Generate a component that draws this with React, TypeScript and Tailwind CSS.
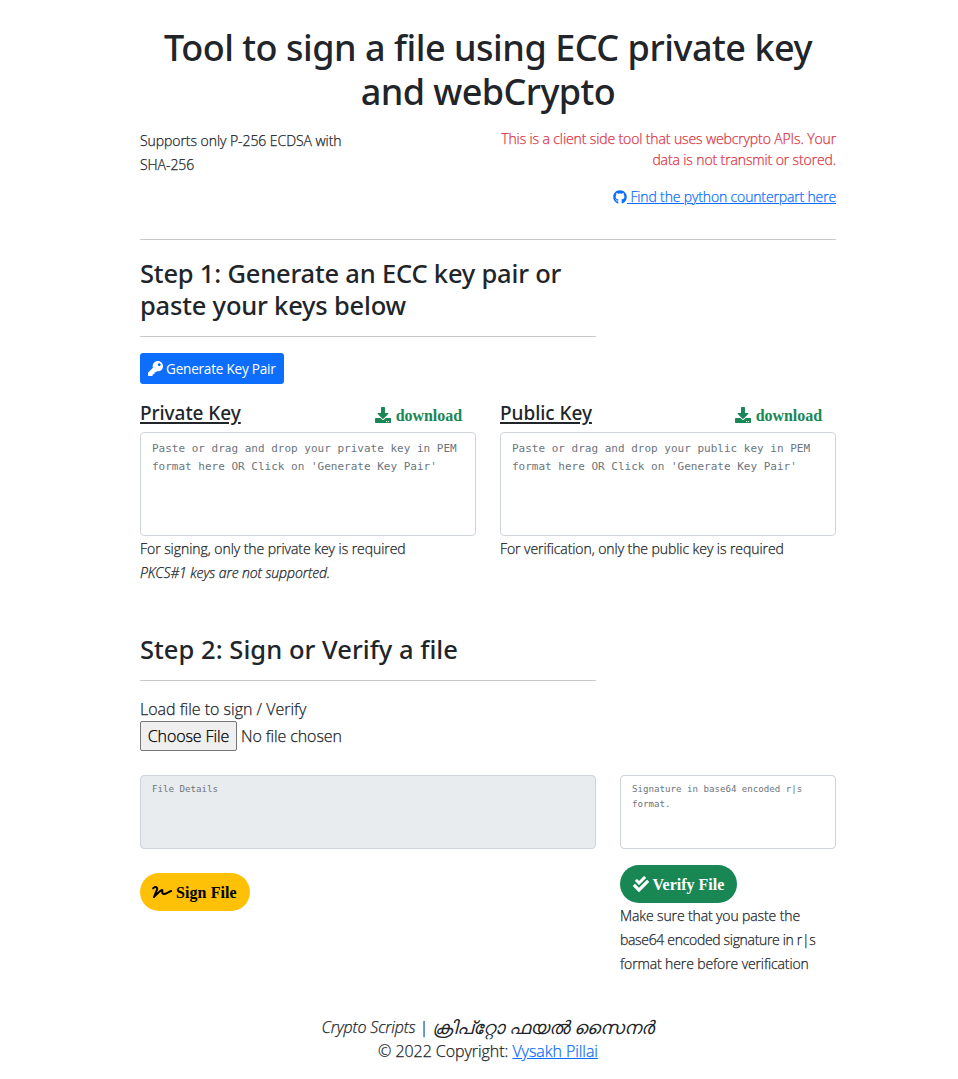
import { FaGithub, FaKey, FaDownload, FaSignature } from 'react-icons/fa';

const heading = "font-['Noto_Sans',sans-serif] font-medium [-webkit-text-stroke:0]";
const pill =
  "flex h-[38px] items-center gap-1 rounded-full pt-[2px] font-['Liberation_Serif',serif] text-[16px] font-bold [-webkit-text-stroke:0]";
const area =
  "block w-full resize-none rounded border border-[#ced4da] px-[11px] font-['DejaVu_Sans_Mono',monospace] font-normal placeholder:text-[#6c757d] placeholder:opacity-100 [-webkit-text-stroke:0]";

function DoubleCheck({ className }: { className?: string }) {
  return (
    <svg viewBox="0 0 512 512" fill="currentColor" className={className}>
      <path d="M505 174.8l-39.6-39.6c-9.4-9.4-24.6-9.4-33.9 0L192 374.7 80.6 263.2c-9.4-9.4-24.6-9.4-33.9 0L7 302.9c-9.4 9.4-9.4 24.6 0 34L175 505c9.4 9.4 24.6 9.4 33.9 0l296-296.2c9.4-9.5 9.4-24.7.1-34zm-324.3 106c6.2 6.3 16.4 6.3 22.6 0l208-208.2c6.2-6.3 6.2-16.4 0-22.6L366.1 4.7c-6.2-6.3-16.4-6.3-22.6 0L192 156.2l-55.4-55.5c-6.2-6.3-16.4-6.3-22.6 0L68.7 146c-6.2 6.3-6.2 16.4 0 22.6l112 112.2z" />
    </svg>
  );
}

function KeyPanel({ title, placeholder }: { title: string; placeholder: string }) {
  return (
    <>
      <div className="flex h-[33px] items-start justify-between pr-[14px]">
        <h5 className={`${heading} pt-[2px] text-[19px] leading-6 tracking-[-0.05px] text-[#212529] underline decoration-2 underline-offset-2`}>
          {title}
        </h5>
        <button className="flex items-center gap-[5px] pt-[5px] font-['Liberation_Serif',serif] text-[16px] leading-6 font-bold tracking-[-0.05px] text-[#198754] [-webkit-text-stroke:0]">
          <FaDownload className="mb-[2px] size-4" />
          download
        </button>
      </div>
      <textarea className={`${area} h-[104px] py-[7px] text-[11px] leading-[18px]`} placeholder={placeholder} />
    </>
  );
}

export default function App() {
  return (
    <div className="h-[1079px] overflow-hidden bg-white font-['Open_Sans',sans-serif] text-[14px] leading-6 font-light text-[#212529] [-webkit-text-stroke:0.25px]">
      <div className="ml-[140px] w-[696px] pt-[26px]">
        <h1 className={`${heading} h-[103px] text-center text-[36px] leading-[44px]`}>
          <span className="block tracking-[-0.48px]">Tool to sign a file using ECC private key</span>
          <span className="block tracking-[-0.6px]">and webCrypto</span>
        </h1>
        <div className="flex h-[110px] justify-between">
          <p className="w-[216px] tracking-[-0.06px]">Supports only P-256 ECDSA with SHA-256</p>
          <div className="w-[345px] text-right">
            <p className="-mt-px leading-[21px] tracking-[-0.12px] text-[#dc3545]">
              This is a client side tool that uses webcrypto APIs. Your
              <br />
              data is not transmit or stored.
            </p>
            <a className="mt-[15px] inline-flex items-center tracking-[-0.15px] text-[#0d6efd]" href="#">
              <FaGithub className="size-[14px]" />
              <span className="whitespace-pre underline"> Find the python counterpart here</span>
            </a>
          </div>
        </div>
        <hr className="border-[#c8c9ca]" />
        <section className="w-[456px]">
          <h2 className={`${heading} h-[96px] pt-[17px] text-[25.5px] leading-8 tracking-[-0.2px]`}>
            Step 1: Generate an ECC key pair or
            <br />
            paste your keys below
          </h2>
          <hr className="border-[#c8c9ca]" />
          <button className="mt-4 flex h-[31px] w-36 items-center rounded-[3px] bg-[#0d6efd] px-2 text-[13.6px] font-normal text-white [-webkit-text-stroke:0]">
            <FaKey className="size-[15px]" />
            <span className="ml-[3px] whitespace-nowrap tracking-[-0.24px]">Generate Key Pair</span>
          </button>
        </section>
        <div className="mt-[15px] grid h-[234px] grid-cols-2 gap-6">
          <section>
            <KeyPanel
              title="Private Key"
              placeholder="Paste or drag and drop your private key in PEM format here OR Click on 'Generate Key Pair'"
            />
            <p className="mt-[1px] tracking-[-0.05px]">For signing, only the private key is required</p>
            <p className="tracking-[-0.1px] italic">PKCS#1 keys are not supported.</p>
          </section>
          <section>
            <KeyPanel
              title="Public Key"
              placeholder="Paste or drag and drop your public key in PEM format here OR Click on 'Generate Key Pair'"
            />
            <p className="mt-[1px] tracking-[-0.07px]">For verification, only the public key is required</p>
          </section>
        </div>
        <section className="w-[456px]">
          <h2 className={`${heading} h-[47px] text-[25.5px] leading-8 tracking-[0.04px]`}>
            Step 2: Sign or Verify a file
          </h2>
          <hr className="border-[#c8c9ca]" />
          <p className="mt-4 text-[16px] leading-6">Load file to sign / Verify</p>
          <div className="flex items-center gap-1 text-[16px] tracking-[-0.1px]">
            <button className="h-[30px] w-[97px] rounded-[2px] border border-[#767676] bg-[#efefef] text-black">
              Choose File
            </button>
            <span>No file chosen</span>
          </div>
        </section>
        <div className="mt-6 flex gap-6">
          <div className="w-[456px]">
            <textarea
              className={`${area} h-[74px] bg-[#e9ecef] py-[6px] text-[9.15px] leading-[15px]`}
              placeholder="File Details"
              readOnly
            />
            <button className={`${pill} mt-6 w-[110px] bg-[#ffc107] pl-3 tracking-[0.08px] text-black`}>
              <FaSignature className="mb-[2px] h-4 w-5" />
              Sign File
            </button>
          </div>
          <div className="w-[216px]">
            <textarea
              className={`${area} h-[74px] py-[6px] text-[9.15px] leading-[15px]`}
              placeholder="Signature in base64 encoded r|s format."
            />
            <button className={`${pill} mt-4 w-[117px] bg-[#198754] pl-[12.5px] text-white`}>
              <DoubleCheck className="mb-[2px] size-4" />
              Verify File
            </button>
            <p className="mt-[1px] text-[14px]">
              <span className="tracking-[-0.12px]">Make sure that you paste the</span>
              <br />
              <span className="tracking-[-0.32px]">base64 encoded signature in r|s</span>
              <br />
              <span className="tracking-[-0.12px]">format here before verification</span>
            </p>
          </div>
        </div>
        <footer className="mt-[39px] text-center text-[16px]">
          <p className="flex h-6 items-center justify-center italic">
            <span className="whitespace-pre tracking-[-0.15px]">Crypto Scripts | </span>
            <span className="text-[18.5px] [-webkit-text-stroke:0]">ക്രിപ്റ്റോ ഫയൽ സൈനർ</span>
          </p>
          <p className="tracking-[-0.05px]">
            © 2022 Copyright:{' '}
            <a className="text-[#0d6efd] underline" href="#">
              Vysakh Pillai
            </a>
          </p>
        </footer>
      </div>
    </div>
  );
}
